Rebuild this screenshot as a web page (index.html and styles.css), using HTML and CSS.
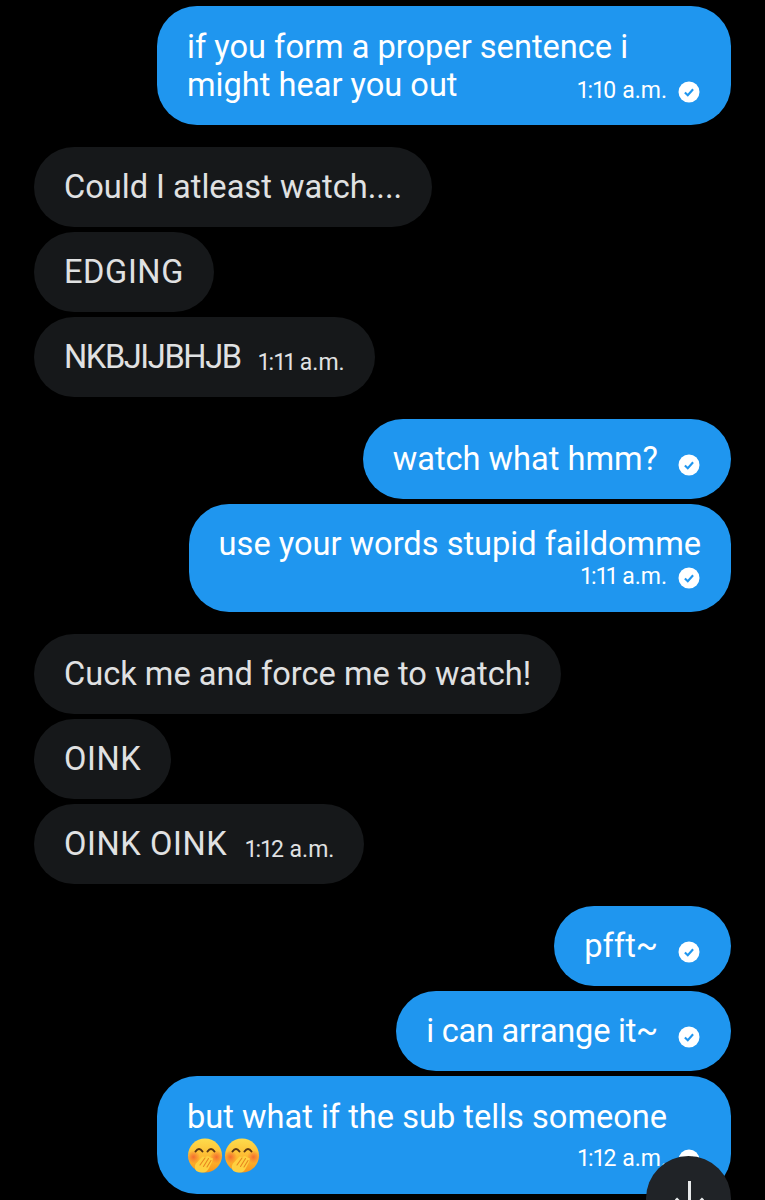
FILE: index.html
```html
<!DOCTYPE html>
<html lang="en">
<head>
<meta charset="utf-8">
<title>Messages</title>
<link rel="stylesheet" href="styles.css">
</head>
<body>
<svg class="defs" width="0" height="0" aria-hidden="true">
  <defs>
    <linearGradient id="face" x1="0" y1="0" x2="0" y2="1">
      <stop offset="0" stop-color="#fedc4c"/>
      <stop offset=".6" stop-color="#fdb62e"/>
      <stop offset="1" stop-color="#f7951c"/>
    </linearGradient>
    <radialGradient id="blush">
      <stop offset="0" stop-color="#f2602f" stop-opacity=".85"/>
      <stop offset="1" stop-color="#f2602f" stop-opacity="0"/>
    </radialGradient>
    <symbol id="tick" viewBox="0 0 22 22">
      <circle cx="11" cy="11" r="10.500" fill="#fff"/>
      <path d="M6.900 11.400l2.900 2.900 5.300-6" fill="none" stroke="#1f96ef" stroke-width="2.100"/>
    </symbol>
    <symbol id="shush" viewBox="0 0 36 36">
      <circle cx="18" cy="17.500" r="17" fill="url(#face)"/>
      <circle cx="6.500" cy="19" r="6.500" fill="url(#blush)"/>
      <circle cx="29.500" cy="19" r="6.500" fill="url(#blush)"/>
      <path d="M8.500 13.500q3.500-5 7 0M20.500 13.500q3.500-5 7 0" fill="none" stroke="#5a3512" stroke-width="2" stroke-linecap="round"/>
      <path d="M9.500 33c-2.500-3-2-6 0-8l6-6.500 3 .5 2.500-1 2.500 1.500 2.500 1-1 3.500-3 6c-1.500 3-3.500 4.500-6 4.500-2.500 0-4.500-.5-6.500-1.500z" fill="#fed040"/>
      <path d="M13 27l5-7M16.500 28.500l5-8M20 29l4-6.500" stroke="#e8871e" stroke-width="1.100" fill="none" stroke-linecap="round"/>
    </symbol>
  </defs>
</svg>
<main class="thread">
  <section class="group group-out">
    <div class="bubble out wide">
      <div class="line">if you form a proper sentence i</div>
      <div class="line split">
        <span>might hear you out</span>
        <span class="meta">1:10 a.m.<svg class="tick"><use href="#tick"/></svg></span>
      </div>
    </div>
  </section>

  <section class="group">
    <div class="bubble in"><div class="line">Could I atleast watch....</div></div>
    <div class="bubble in"><div class="line caps-wide">EDGING</div></div>
    <div class="bubble in">
      <div class="line split">
        <span class="caps">NKBJIJBHJB</span>
        <span class="meta">1:11 a.m.</span>
      </div>
    </div>
  </section>

  <section class="group group-out">
    <div class="bubble out">
      <div class="line split">
        <span>watch what hmm?</span>
        <span class="meta solo"><svg class="tick"><use href="#tick"/></svg></span>
      </div>
    </div>
    <div class="bubble out">
      <div class="line">use your words stupid faildomme</div>
      <div class="meta-row"><span class="meta">1:11 a.m.<svg class="tick"><use href="#tick"/></svg></span></div>
    </div>
  </section>

  <section class="group">
    <div class="bubble in"><div class="line">Cuck me and force me to watch!</div></div>
    <div class="bubble in"><div class="line caps-wide">OINK</div></div>
    <div class="bubble in">
      <div class="line split">
        <span class="caps-wide">OINK OINK</span>
        <span class="meta">1:12 a.m.</span>
      </div>
    </div>
  </section>

  <section class="group group-out">
    <div class="bubble out">
      <div class="line split">
        <span>pfft~</span>
        <span class="meta solo"><svg class="tick"><use href="#tick"/></svg></span>
      </div>
    </div>
    <div class="bubble out">
      <div class="line split">
        <span class="tight">i can arrange it~</span>
        <span class="meta solo"><svg class="tick"><use href="#tick"/></svg></span>
      </div>
    </div>
    <div class="bubble out wide last">
      <div class="line">but what if the sub tells someone</div>
      <div class="line split emoji-line">
        <span class="emoji-row"><svg class="emoji"><use href="#shush"/></svg><svg class="emoji"><use href="#shush"/></svg></span>
        <span class="meta">1:12 a.m.<svg class="tick"><use href="#tick"/></svg></span>
      </div>
    </div>
  </section>
</main>
<div class="scroll-down" aria-label="Scroll to bottom">
  <svg class="arrow" width="40" height="40" viewBox="0 0 40 40"><path d="M20.500 1v32M7 18.500l13.500 14 13.500-14" fill="none" stroke="#e7e9ea" stroke-width="3"/></svg>
</div>
</body>
</html>
```

FILE: styles.css
```css
html, body {
  margin: 0;
  padding: 0;
  background: #000;
}
body {
  height: 1200px;
  overflow: hidden;
  position: relative;
  font-family: Roboto, "Liberation Sans", sans-serif;
}
.defs {
  position: absolute;
}
.thread {
  display: flex;
  flex-direction: column;
  gap: 22px;
  padding: 6px 34px 0;
}
.group {
  display: flex;
  flex-direction: column;
  align-items: flex-start;
  gap: 5px;
}
.group-out {
  align-items: flex-end;
}
.bubble {
  box-sizing: border-box;
  min-height: 80px;
  padding: 21px 30px;
  border-radius: 40px;
  font-size: 32.6px;
  line-height: 38px;
}
.in {
  background: #16181a;
  color: #e0e1e2;
}
.out {
  background: #1f96ef;
  color: #fff;
}
.wide {
  width: 574px;
  padding-top: 22px;
  padding-bottom: 21px;
}
.last {
  padding-bottom: 20px;
}
.line {
  white-space: nowrap;
}
.caps {
  letter-spacing: -1.4px;
}
.caps-wide {
  letter-spacing: 0.6px;
}
.tight {
  letter-spacing: -0.25px;
}
.split {
  display: flex;
  justify-content: space-between;
  align-items: baseline;
  gap: 18px;
}
.emoji-line {
  align-items: center;
}
.meta {
  display: inline-flex;
  align-items: center;
  font-size: 23px;
  font-variant-numeric: proportional-nums;
  line-height: 26px;
  position: relative;
  top: 2px;
}
.meta-row {
  display: flex;
  justify-content: flex-end;
  margin-top: -1px;
  padding-bottom: 3px;
}
.tick {
  width: 22px;
  height: 22px;
  margin-left: 11px;
  margin-right: 1px;
  flex: none;
  position: relative;
  top: 1px;
}
.solo .tick {
  top: 4px;
  margin-left: 2px;
}
.emoji-row {
  display: inline-flex;
  align-items: center;
  gap: 1px;
  height: 36px;
  margin-top: 2px;
}
.emoji-line .meta {
  top: 4px;
}
.emoji {
  width: 36px;
  height: 36px;
}
.scroll-down {
  position: absolute;
  left: 646px;
  top: 1156px;
  width: 85px;
  height: 85px;
  border-radius: 50%;
  background: #202327;
  display: flex;
  justify-content: center;
}
.arrow {
  margin-top: 24px;
}
```
